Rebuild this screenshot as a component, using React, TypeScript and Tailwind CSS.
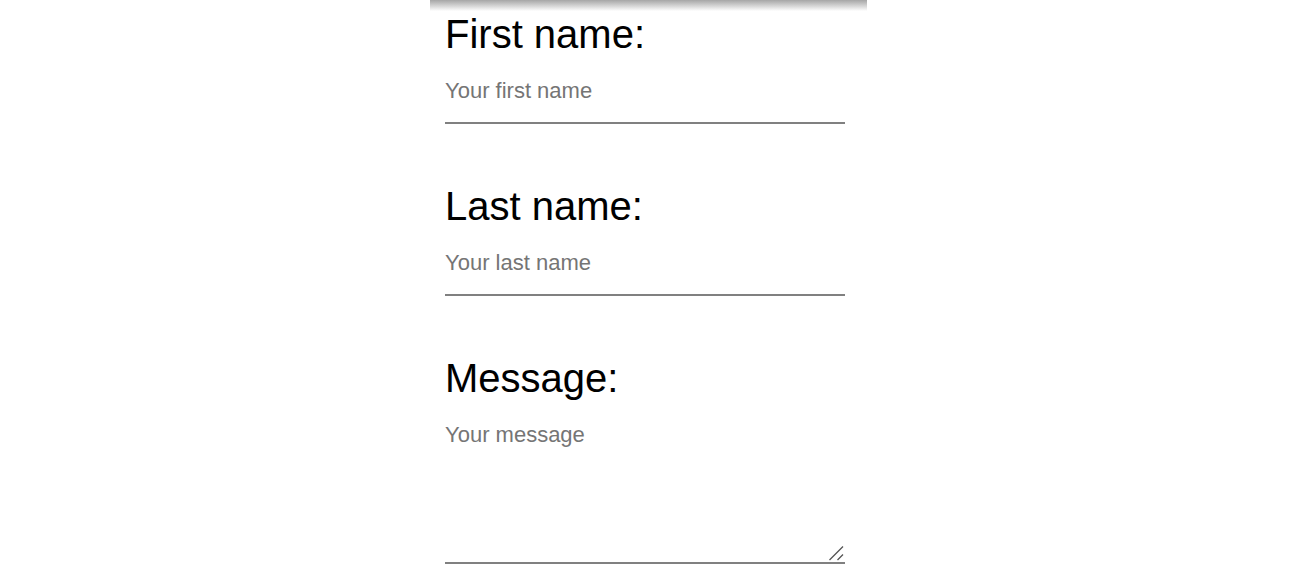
const FIELDS = [
  { id: 'first', label: 'First name:', placeholder: 'Your first name' },
  { id: 'last', label: 'Last name:', placeholder: 'Your last name' },
]

const labelCls = 'block text-[40px] leading-[46px] text-black'
const fieldCls =
  'block w-[400px] border-0 border-b-2 border-[#808080] bg-transparent px-0 pt-[21px] pb-[19px] text-[22px] leading-[25px] text-black outline-none placeholder:text-[#757575]'

export default function App() {
  return (
    <div className="min-h-screen bg-white font-['Liberation_Sans',Arial,sans-serif]">
      <div className="mx-auto w-[437px]">
        <div className="h-[11px] bg-gradient-to-b from-[#a6a6a6] to-white" />
        <form className="flex flex-col gap-[59px] px-[15px]">
          {FIELDS.map((f) => (
            <div key={f.id}>
              <label htmlFor={f.id} className={labelCls}>
                {f.label}
              </label>
              <input id={f.id} type="text" placeholder={f.placeholder} className={fieldCls} />
            </div>
          ))}
          <div>
            <label htmlFor="message" className={labelCls}>
              Message:
            </label>
            <div className="relative w-[400px]">
              <textarea
                id="message"
                placeholder="Your message"
                className={`${fieldCls} h-[163px] resize-none`}
              />
              {/* resize grip */}
              <svg
                className="pointer-events-none absolute right-[1px] bottom-[3px] h-[16px] w-[16px]"
                viewBox="0 0 16 16"
              >
                <path d="M1.5 15 L15 1.5 M9.5 15 L15 9.5" stroke="#555" strokeWidth="1.3" fill="none" />
              </svg>
            </div>
          </div>
        </form>
      </div>
    </div>
  )
}
